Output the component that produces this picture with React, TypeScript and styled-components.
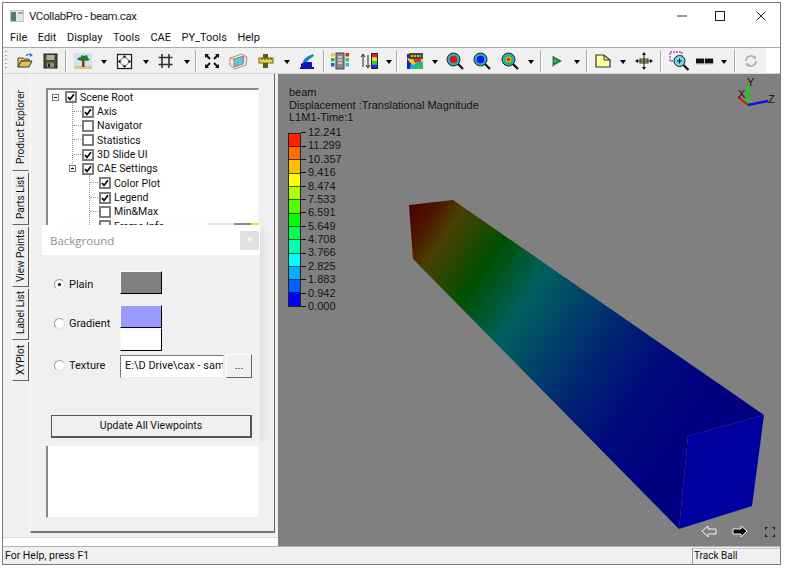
import styled, { createGlobalStyle } from "styled-components";
import type { ReactNode } from "react";

const GlobalStyle = createGlobalStyle`
  html, body {
    margin: 0;
    padding: 0;
    background: #fff;
  }
  body {
    font-family: Roboto, "Noto Sans", sans-serif;
    font-size: 11px;
    color: #111;
  }
`;

const Window = styled.div`
  box-sizing: border-box;
  width: 779px;
  height: 563px;
  margin: 2px 0 0 2px;
  border: 1px solid #7a7a7a;
  display: flex;
  flex-direction: column;
  background: #fff;
  overflow: hidden;
`;

const TitleBar = styled.div`
  height: 25px;
  flex: none;
  display: flex;
  align-items: center;
  padding-left: 7px;
  gap: 5px;
  font-size: 11.5px;
  letter-spacing: -0.4px;
  color: #222;
`;

const TitleText = styled.span`
  flex: 1;
`;

const WindowButton = styled.div<{ $w: number }>`
  width: ${(p) => p.$w}px;
  display: flex;
  justify-content: center;
  align-items: center;
`;

const MenuBar = styled.div`
  height: 19px;
  flex: none;
  display: flex;
  align-items: center;
  padding-left: 7px;
  gap: 10.5px;
  font-size: 11px;
  border-bottom: 1px solid #a8a8a8;
`;

const Toolbar = styled.div`
  height: 26px;
  flex: none;
  display: flex;
  align-items: center;
  background: linear-gradient(#f0f0f0, #f0f0f0) no-repeat left / 763px 100%;
  box-sizing: border-box;
  border-bottom: 1px solid #d8d8d8;
`;

const Gripper = styled.div`
  width: 9px;
  height: 20px;
  flex: none;
  background: repeating-linear-gradient(#a0a0a0 0 1px, transparent 1px 4px) no-repeat 2px 0 / 2px 100%;
`;

const ToolButton = styled.div<{ $w: number }>`
  width: ${(p) => p.$w}px;
  height: 22px;
  flex: none;
  display: flex;
  align-items: center;
  justify-content: center;
`;

const Separator = styled.div<{ $w: number }>`
  width: ${(p) => p.$w}px;
  height: 22px;
  flex: none;
  display: flex;
  justify-content: center;
  &::after {
    content: "";
    width: 1px;
    background: #a9a9a9;
    border-right: 1px solid #fafafa;
  }
`;

const Caret = styled.div<{ $w: number }>`
  width: ${(p) => p.$w}px;
  height: 22px;
  flex: none;
  display: flex;
  align-items: center;
  justify-content: center;
  &::after {
    content: "";
    border-left: 3.5px solid transparent;
    border-right: 3.5px solid transparent;
    border-top: 4px solid #000;
    margin-top: 2px;
  }
`;

const Main = styled.div`
  flex: 1;
  min-height: 0;
  display: flex;
`;

const Sidebar = styled.div`
  width: 275px;
  flex: none;
  display: flex;
  flex-direction: column;
  background: #f0f0f0;
`;

const SidebarBody = styled.div`
  height: 459px;
  flex: none;
  display: flex;
`;

const WhiteBand = styled.div`
  height: 8px;
  margin-top: 4px;
  background: #fff;
  border-top: 1px solid #d9d9d9;
`;

const TabColumn = styled.div`
  width: 27px;
  flex: none;
  box-sizing: border-box;
  padding: 16px 0 0 9px;
  display: flex;
  flex-direction: column;
  gap: 2px;
`;

const Tab = styled.div<{ $h: number; $active?: boolean }>`
  width: 17px;
  height: ${(p) => p.$h}px;
  box-sizing: border-box;
  padding-top: ${(p) => (p.$active ? 5 : 2)}px;
  writing-mode: vertical-rl;
  transform: rotate(180deg);
  display: flex;
  align-items: center;
  justify-content: center;
  font-size: 10px;
  line-height: 17px;
  white-space: nowrap;
  border-left: 1px solid ${(p) => (p.$active ? "#f0f0f0" : "#555")};
  border-top: 1px solid #666;
  border-right: 1px solid #fff;
`;

const ContentFrame = styled.div`
  width: 245px;
  flex: none;
  box-sizing: border-box;
  padding: 14px 15px 13px 15px;
  border-left: 1px solid #fafafa;
  border-right: 1px solid #666;
  border-bottom: 2px solid #777;
`;

const TreePanel = styled.div`
  position: relative;
  height: 100%;
  box-sizing: border-box;
  background: #fff;
  border-left: 2px solid #8a8a8a;
  border-top: 2px solid #8a8a8a;
  border-right: 1px solid #f4f4f4;
  border-bottom: 1px solid #f4f4f4;
`;

const TreeRow = styled.div<{ $indent: number }>`
  height: 14.35px;
  display: flex;
  align-items: center;
  padding-left: ${(p) => p.$indent}px;
  font-size: 10.5px;
  white-space: nowrap;
`;

const Expander = styled.span`
  width: 7px;
  height: 7px;
  flex: none;
  box-sizing: border-box;
  border: 1px solid #777;
  margin-right: 6px;
  position: relative;
  &::after {
    content: "";
    position: absolute;
    left: 1px;
    right: 1px;
    top: 2px;
    height: 1px;
    background: #000;
  }
`;

const Connector = styled.span`
  width: 8px;
  flex: none;
  height: 1px;
  margin: 0 1px 0 3px;
  border-top: 1px dotted #999;
`;

const Check = styled.span`
  width: 12px;
  height: 12px;
  flex: none;
  box-sizing: border-box;
  border: 2px solid #7c7c7c;
  background: #fff;
  margin-right: 3px;
  display: flex;
  align-items: center;
  justify-content: center;
`;

const GuideLine = styled.div<{ $left: number; $top: number; $h: number }>`
  position: absolute;
  left: ${(p) => p.$left}px;
  top: ${(p) => p.$top}px;
  height: ${(p) => p.$h}px;
  border-left: 1px dotted #999;
`;

const HiddenRowEdge = styled.div`
  position: absolute;
  left: 159px;
  right: -1px;
  top: 133px;
  height: 2px;
  background: linear-gradient(90deg, #e8e8e8 0 27px, #8c8c8c 27px 44px, #f4e020 44px);
`;

const Dialog = styled.div`
  position: absolute;
  left: -6px;
  top: 135px;
  width: 218px;
  height: 221px;
  background: #f0f0f0;
  box-shadow: 8px 0 8px -4px rgba(0, 0, 0, 0.07);
  display: flex;
  flex-direction: column;
`;

const DialogHeader = styled.div`
  height: 30px;
  flex: none;
  background: #fff;
  display: flex;
  align-items: center;
  justify-content: space-between;
  padding: 0 1px 0 8px;
  font-family: "Open Sans", sans-serif;
  font-size: 11.5px;
  color: #8f8f8f;
`;

const CloseButton = styled.div`
  width: 19px;
  height: 19px;
  margin-top: 1px;
  background: #e1e1e1;
  color: #fff;
  font-size: 10px;
  line-height: 17px;
  text-align: center;
`;

const DialogBody = styled.div`
  flex: 1;
  padding: 16px 8px 0 9px;
`;

const OptionRow = styled.div<{ $top: number }>`
  display: flex;
  align-items: center;
  margin-top: ${(p) => p.$top}px;
`;

const OptionLabel = styled.label<{ $lift?: number; $drop?: number }>`
  width: 69px;
  flex: none;
  display: flex;
  align-items: center;
  gap: 4px;
  font-size: 11px;
  padding-left: 3px;
  box-sizing: border-box;
  padding-top: ${(p) => p.$drop ?? 0}px;
  padding-bottom: ${(p) => p.$lift ?? 0}px;
`;

const Radio = styled.span<{ $on?: boolean }>`
  width: 11px;
  height: 11px;
  flex: none;
  box-sizing: border-box;
  border-radius: 50%;
  background: #fff;
  border: 1px solid #9a9a9a;
  border-right-color: #e4e4e4;
  border-bottom-color: #e4e4e4;
  display: flex;
  align-items: center;
  justify-content: center;
  &::after {
    content: "";
    width: 3px;
    height: 3px;
    border-radius: 50%;
    background: ${(p) => (p.$on ? "#000" : "transparent")};
  }
`;

const Swatch = styled.div<{ $color: string; $h: number }>`
  width: 42px;
  height: ${(p) => p.$h}px;
  box-sizing: border-box;
  background: ${(p) => p.$color};
  border-top: 1px solid #f8f8f8;
  border-left: 1px solid #f8f8f8;
  border-right: 1px solid #000;
  border-bottom: 1px solid #000;
`;

const SwatchStack = styled.div`
  display: flex;
  flex-direction: column;
`;

const PathBox = styled.div`
  width: 104px;
  height: 23px;
  flex: none;
  box-sizing: border-box;
  background: #fff;
  border: 1px solid #777;
  border-right-color: #eee;
  border-bottom-color: #eee;
  padding-left: 4px;
  font-size: 11px;
  line-height: 20px;
  white-space: nowrap;
  overflow: hidden;
`;

const SmallButton = styled.div`
  width: 26px;
  height: 24px;
  margin-left: 2px;
  box-sizing: border-box;
  border: 1px solid #fff;
  border-right-color: #666;
  border-bottom-color: #666;
  text-align: center;
  line-height: 22px;
  font-size: 11px;
`;

const WideButton = styled.div`
  margin-top: 37px;
  width: 201px;
  height: 23px;
  box-sizing: border-box;
  border: 1px solid #555;
  border-right-width: 2px;
  border-bottom-width: 2px;
  text-align: center;
  line-height: 20px;
  font-size: 10.5px;
  background: #f0f0f0;
`;

const Viewport = styled.div`
  flex: 1;
  position: relative;
  background: #808080;
  padding: 12px 0 0 10px;
  font-family: "Liberation Sans", Arial, sans-serif;
  font-size: 11px;
  color: #151515;
  line-height: 12.5px;
  overflow: hidden;
`;

const SceneLayer = styled.svg`
  position: absolute;
  left: 0;
  top: 0;
`;

const Caption = styled.div`
  position: relative;
  margin-left: 1px;
  white-space: nowrap;
`;

const Legend = styled.div`
  position: relative;
  margin-top: 2.5px;
  display: flex;
`;

const LegendBar = styled.div`
  width: 13px;
  margin-top: 6.7px;
  height: 174px;
  box-sizing: border-box;
  border: 1px solid #222;
  display: flex;
  flex-direction: column;
`;

const LegendBand = styled.div<{ $color: string }>`
  flex: 1;
  background: ${(p) => p.$color};
  border-bottom: 1px solid rgba(0, 0, 0, 0.65);
  &:last-child {
    border-bottom: 0;
  }
`;

const LegendScale = styled.div`
  display: flex;
  flex-direction: column;
`;

const LegendLabel = styled.div`
  height: 13.38px;
  line-height: 13.38px;
  display: flex;
  align-items: center;
  gap: 2px;
  font-size: 11px;
  &::before {
    content: "";
    width: 5px;
    height: 1px;
    background: #111;
  }
`;

const StatusBar = styled.div`
  height: 18px;
  flex: none;
  box-sizing: border-box;
  display: flex;
  align-items: center;
  background: #f0f0f0;
  border-top: 1px solid #b4b4b4;
  padding-left: 2px;
  font-size: 10.5px;
`;

const StatusText = styled.div`
  flex: 1;
`;

const StatusPane = styled.div`
  width: 88px;
  height: 100%;
  box-sizing: border-box;
  margin-top: 2px;
  padding-left: 1px;
  border-left: 1px solid #9a9a9a;
  border-top: 1px solid #c8c8c8;
  line-height: 14px;
  font-size: 10px;
`;

const Svg = ({ w = 18, h = 18, box, children }: { w?: number; h?: number; box?: string; children: ReactNode }) => (
  <svg width={w} height={h} viewBox={box ?? `0 0 ${w} ${h}`}>
    {children}
  </svg>
);

const OpenIcon = () => (
  <Svg>
    <path d="M2 6h5l1 1h5v2H5L2 15z" fill="#f4d25a" stroke="#444" />
    <path d="M2 15l3-6h11l-3 6z" fill="#e8c04a" stroke="#333" />
    <path d="M10 4c1-2 3-2 5-1" fill="none" stroke="#3a6fd8" strokeWidth="1.4" />
    <path d="M14 1l3 2-3 2z" fill="#3a6fd8" />
  </Svg>
);

const SaveIcon = () => (
  <Svg>
    <rect x="2" y="2" width="13" height="14" fill="#4b4b2c" stroke="#222" />
    <rect x="4.5" y="3" width="8" height="5" fill="#b0b0a0" />
    <rect x="5" y="10.5" width="7" height="5" fill="#8f8f70" />
    <rect x="6" y="11.5" width="2" height="3.5" fill="#222" />
  </Svg>
);

const TreeIcon = () => (
  <Svg w={20} h={18}>
    <rect x="1" y="1" width="18" height="16" fill="#cfe2ee" />
    <rect x="1" y="14" width="18" height="3" fill="#d8cf72" />
    <rect x="9" y="8" width="2.5" height="7" fill="#8a3a1a" />
    <path d="M4 8l2-3 1 1 2-3 2 1 3-1 1 3 2 2-4 1-2-1-3 1-2-1z" fill="#1a7d24" />
  </Svg>
);

const FitIcon = () => (
  <Svg>
    <rect x="1.5" y="2.5" width="14" height="14" fill="#fff" stroke="#222" strokeWidth="1.3" />
    <circle cx="8.5" cy="9.5" r="4" fill="none" stroke="#888" />
    <path d="M8.5 3l2 2.4h-4zM8.5 16l2-2.4h-4zM2 9.5l2.4-2v4zM15 9.5l-2.4-2v4z" fill="#111" />
  </Svg>
);

const GridIcon = () => (
  <Svg>
    <path d="M5 2v14M12 2v14M1.5 5.5h14M1.5 12.5h14" stroke="#333" strokeWidth="1.6" />
  </Svg>
);

const CornersIcon = () => (
  <Svg>
    <path d="M3 3l4 4M15 3l-4 4M3 15l4-4M15 15l-4-4" stroke="#111" strokeWidth="2" />
    <path d="M2 2h4l-4 4zM16 2h-4l4 4zM2 16h4l-4-4zM16 16h-4l4-4z" fill="#111" />
  </Svg>
);

const CubeIcon = () => (
  <Svg w={20} h={18}>
    <path d="M2 6l12-4 5 3-1 8-11 4-5-4z" fill="#ececec" stroke="#999" />
    <path d="M6 7l10-3-1 8-9 3z" fill="#48d2e8" stroke="#d65a5a" />
    <path d="M2 6l4 1v8" fill="none" stroke="#d9a030" />
  </Svg>
);

const RulerIcon = () => (
  <Svg w={18} h={18}>
    <rect x="6" y="2" width="5" height="14" fill="#5a5a20" />
    <rect x="2" y="6" width="14" height="5" fill="#e8d848" stroke="#6a6a10" />
    <path d="M5 6v2M8 6v2M11 6v2M14 6v2" stroke="#333" />
  </Svg>
);

const BeamToolIcon = () => (
  <Svg>
    <path d="M3 16v-4l3-2h8v6z" fill="#0a14d8" />
    <path d="M5 10c1-4 5-6 10-8l1 2c-3 2-6 4-7 6z" fill="#0d8fb8" />
    <rect x="2" y="15" width="14" height="2" fill="#1a1a80" />
  </Svg>
);

const LegendToolIcon = () => (
  <Svg w={20} h={18}>
    <rect x="6" y="1" width="8" height="16" fill="#8a8a8a" stroke="#444" />
    <path d="M8 5h4M8 8h4M8 11h4" stroke="#fff" />
    <rect x="1" y="1" width="3.5" height="3.5" fill="#f0d020" />
    <rect x="1" y="6" width="3.5" height="3.5" fill="#20c040" />
    <rect x="1" y="11" width="3.5" height="3.5" fill="#2050e0" />
    <rect x="15.5" y="1" width="3.5" height="3.5" fill="#e02020" />
    <rect x="15.5" y="6" width="3.5" height="3.5" fill="#20d060" />
    <rect x="15.5" y="11" width="3.5" height="3.5" fill="#20c0e0" />
  </Svg>
);

const SortBarIcon = () => (
  <Svg w={20} h={18}>
    <path d="M4 3v12M2 5l2-3 2 3M9 3v12M7 13l2 3 2-3" stroke="#222" fill="none" />
    <rect x="13" y="2" width="5" height="3.5" fill="#ee1c1c" />
    <rect x="13" y="5.5" width="5" height="3.5" fill="#f2e020" />
    <rect x="13" y="9" width="5" height="3.5" fill="#20d040" />
    <rect x="13" y="12.5" width="5" height="3.5" fill="#1a28e8" />
    <rect x="12.5" y="1.5" width="6" height="15" fill="none" stroke="#222" />
  </Svg>
);

const ContourIcon = () => (
  <Svg w={20} h={18}>
    <rect x="2" y="2" width="16" height="15" fill="#1424c8" />
    <path d="M5 17c0-6 3-9 13-9v9z" fill="#18b0d8" />
    <path d="M9 17c1-3 4-5 9-5v5z" fill="#2cc050" />
    <path d="M2 6h16v4c-6 0-8 1-9 3-3-1-5-3-7-7z" fill="#e8d020" />
    <path d="M8 7h8v3c-3 0-5 1-6 1z" fill="#e83020" />
    <rect x="4" y="1" width="14" height="6" fill="#4a4a30" />
    <path d="M6 4h10" stroke="#f0e070" strokeDasharray="2 1" strokeWidth="1.5" />
  </Svg>
);

const Lens = ({ core, ring = "#16b8c8" }: { core: string; ring?: string }) => (
  <Svg w={20} h={20}>
    <circle cx="8.5" cy="8.5" r="6.5" fill={ring} stroke="#222" />
    <circle cx="8.5" cy="8.5" r="3.8" fill={core} />
    <path d="M13 13l5 5" stroke="#111" strokeWidth="2.2" />
  </Svg>
);

const MixLens = () => (
  <Svg w={20} h={20}>
    <circle cx="8.5" cy="8.5" r="6.5" fill="#16b8c8" stroke="#222" />
    <circle cx="8.5" cy="8.5" r="4.4" fill="#20b848" />
    <circle cx="8.5" cy="8.5" r="3" fill="#f0c020" />
    <circle cx="8.5" cy="8.5" r="1.8" fill="#e02020" />
    <path d="M13 13l5 5" stroke="#111" strokeWidth="2.2" />
  </Svg>
);

const PlayFlag = () => (
  <Svg w={14} h={16}>
    <path d="M3 3v11" stroke="#666" />
    <path d="M3 3l9 5-9 5z" fill="#188038" />
    <path d="M4 6l4 2-4 2z" fill="#50b060" />
  </Svg>
);

const NoteIcon = () => (
  <Svg>
    <path d="M2 3h8l6 5v7H2z" fill="#ffff99" stroke="#333" strokeWidth="1.2" />
    <path d="M10 3v5h6" fill="none" stroke="#333" />
  </Svg>
);

const MoveIcon = () => (
  <Svg w={18} h={18}>
    <rect x="5" y="7" width="8" height="4" fill="#e8d848" stroke="#333" />
    <path d="M9 1v16M1 9h16" stroke="#222" />
    <path d="M9 0l2 3H7zM9 18l2-3H7zM0 9l3-2v4zM18 9l-3-2v4z" fill="#111" />
  </Svg>
);

const ZoomRectIcon = () => (
  <Svg w={20} h={20} box="0 0 20 20">
    <rect x="1" y="1" width="12" height="9" fill="none" stroke="#a050b0" strokeDasharray="2 1" strokeWidth="1.3" />
    <circle cx="10.5" cy="10" r="5.5" fill="#6fd8e8" stroke="#222" />
    <path d="M8 10h5M10.5 7.5v5" stroke="#111" />
    <path d="M14.5 14l5 5" stroke="#111" strokeWidth="2.2" />
  </Svg>
);

const BarsIcon = () => (
  <Svg w={22} h={8}>
    <rect x="0" y="1" width="10" height="6" fill="#111" />
    <rect x="11" y="1" width="10" height="6" fill="#111" />
    <path d="M0 7.5h21" stroke="#999" />
  </Svg>
);

const RefreshIcon = () => (
  <Svg>
    <path d="M4 9a5 5 0 0 1 8-4M14 9a5 5 0 0 1-8 4" fill="none" stroke="#b4b4b4" strokeWidth="1.8" />
    <path d="M10 5.5l4-2v4zM8 12.5l-4 2v-4z" fill="#b4b4b4" />
  </Svg>
);

type ToolItem =
  | { kind: "btn"; w: number; icon: ReactNode }
  | { kind: "caret"; w: number }
  | { kind: "sep"; w: number };

const btn = (w: number, icon: ReactNode): ToolItem => ({ kind: "btn", w, icon });
const caret = (w: number): ToolItem => ({ kind: "caret", w });
const sep = (w: number): ToolItem => ({ kind: "sep", w });

const tools: ToolItem[] = [
  btn(26, <OpenIcon />),
  btn(25, <SaveIcon />),
  sep(6),
  btn(28, <TreeIcon />),
  caret(14),
  btn(28, <FitIcon />),
  caret(13),
  btn(28, <GridIcon />),
  caret(13),
  sep(5),
  btn(27, <CornersIcon />),
  btn(25, <CubeIcon />),
  btn(31, <RulerIcon />),
  caret(12),
  btn(28, <BeamToolIcon />),
  sep(5),
  btn(28, <LegendToolIcon />),
  btn(30, <SortBarIcon />),
  caret(10),
  sep(6),
  btn(30, <ContourIcon />),
  caret(10),
  btn(30, <Lens core="#e81010" />),
  btn(24, <Lens core="#1010e8" />),
  btn(32, <MixLens />),
  caret(10),
  sep(10),
  btn(22, <PlayFlag />),
  caret(18),
  sep(2),
  btn(30, <NoteIcon />),
  caret(10),
  btn(32, <MoveIcon />),
  sep(2),
  btn(34, <ZoomRectIcon />),
  btn(18, <BarsIcon />),
  caret(20),
  sep(2),
  btn(30, <RefreshIcon />),
  sep(1),
];

const menus = ["File", "Edit", "Display", "Tools", "CAE", "PY_Tools", "Help"];

const tabs = [
  { label: "Product Explorer", h: 81, active: true },
  { label: "Parts List", h: 52 },
  { label: "View Points", h: 60 },
  { label: "Label List", h: 51 },
  { label: "XYPlot", h: 39 },
];

const treeRows = [
  { label: "Scene Root", indent: 4, on: true, expander: true },
  { label: "Axis", indent: 22, on: true },
  { label: "Navigator", indent: 22, on: false },
  { label: "Statistics", indent: 22, on: false },
  { label: "3D Slide UI", indent: 22, on: true },
  { label: "CAE Settings", indent: 21, on: true, expander: true },
  { label: "Color Plot", indent: 39, on: true },
  { label: "Legend", indent: 39, on: true },
  { label: "Min&Max", indent: 39, on: false },
  { label: "Frame Info", indent: 39, on: false },
];

const legendValues = [
  "12.241", "11.299", "10.357", "9.416", "8.474", "7.533", "6.591",
  "5.649", "4.708", "3.766", "2.825", "1.883", "0.942", "0.000",
];

const legendColors = [
  "#ff2000", "#ff7000", "#ffc000", "#ffff00", "#b0ff00", "#50ff00", "#00ff00",
  "#00ff50", "#00ffb0", "#00ffff", "#00b0ff", "#0060ff", "#0000ff",
];

const CheckMark = () => (
  <svg width="8" height="8" viewBox="0 0 8 8">
    <path d="M1 4l2 2.4L7 1.2" fill="none" stroke="#000" strokeWidth="1.7" />
  </svg>
);

const App = () => {
  return (
    <Window>
      <GlobalStyle />
      <TitleBar>
        <svg width="14" height="12" viewBox="0 0 14 12">
          <rect x="0" y="0" width="14" height="12" fill="#dfe6e6" stroke="#9aa" />
          <rect x="1" y="2" width="5" height="9" fill="#5d7474" />
          <rect x="8" y="2" width="5" height="2" fill="#9ab" />
        </svg>
        <TitleText>VCollabPro - beam.cax</TitleText>
        <WindowButton $w={34}>
          <svg width="11" height="2" viewBox="0 0 11 2">
            <path d="M0 1h10" stroke="#333" />
          </svg>
        </WindowButton>
        <WindowButton $w={32}>
          <svg width="10" height="10" viewBox="0 0 10 10">
            <rect x="0.5" y="0.5" width="9" height="9" fill="none" stroke="#222" />
          </svg>
        </WindowButton>
        <WindowButton $w={39}>
          <svg width="10" height="10" viewBox="0 0 10 10">
            <path d="M0.5 0.5l9 9M9.5 0.5l-9 9" stroke="#222" />
          </svg>
        </WindowButton>
      </TitleBar>
      <MenuBar>
        {menus.map((m) => (
          <span key={m}>{m}</span>
        ))}
      </MenuBar>
      <Toolbar>
        <Gripper />
        {tools.map((t, i) => {
          if (t.kind === "sep") return <Separator key={i} $w={t.w} />;
          if (t.kind === "caret") return <Caret key={i} $w={t.w} />;
          return (
            <ToolButton key={i} $w={t.w}>
              {t.icon}
            </ToolButton>
          );
        })}
      </Toolbar>
      <Main>
        <Sidebar>
          <SidebarBody>
            <TabColumn>
              {tabs.map((t) => (
                <Tab key={t.label} $h={t.h} $active={t.active}>
                  {t.label}
                </Tab>
              ))}
            </TabColumn>
            <ContentFrame>
              <TreePanel>
                <GuideLine $left={24} $top={10} $h={68} />
                <GuideLine $left={41} $top={85} $h={50} />
                {treeRows.map((r) => (
                  <TreeRow key={r.label} $indent={r.indent}>
                    {r.expander ? <Expander /> : <Connector />}
                    <Check>{r.on && <CheckMark />}</Check>
                    {r.label}
                  </TreeRow>
                ))}
                <HiddenRowEdge />
                <Dialog>
                  <DialogHeader>
                    Background
                    <CloseButton>x</CloseButton>
                  </DialogHeader>
                  <DialogBody>
                    <OptionRow $top={0}>
                      <OptionLabel $drop={3}>
                        <Radio $on />
                        Plain
                      </OptionLabel>
                      <Swatch $color="#808080" $h={23} />
                    </OptionRow>
                    <OptionRow $top={11}>
                      <OptionLabel $lift={10}>
                        <Radio />
                        Gradient
                      </OptionLabel>
                      <SwatchStack>
                        <Swatch $color="#9999ff" $h={23} />
                        <Swatch $color="#ffffff" $h={23} />
                      </SwatchStack>
                    </OptionRow>
                    <OptionRow $top={3}>
                      <OptionLabel $lift={2}>
                        <Radio />
                        Texture
                      </OptionLabel>
                      <PathBox>E:\D Drive\cax - sam</PathBox>
                      <SmallButton>...</SmallButton>
                    </OptionRow>
                    <WideButton>Update All Viewpoints</WideButton>
                  </DialogBody>
                </Dialog>
              </TreePanel>
            </ContentFrame>
          </SidebarBody>
          <WhiteBand />
        </Sidebar>
        <Viewport>
          <SceneLayer width="502" height="472" viewBox="278 74 502 472">
            <defs>
              <linearGradient id="beamFill" gradientUnits="userSpaceOnUse" x1="409" y1="205" x2="708" y2="403">
                <stop offset="0" stopColor="#4c0000" />
                <stop offset="0.07" stopColor="#4c1800" />
                <stop offset="0.13" stopColor="#4a4000" />
                <stop offset="0.27" stopColor="#005000" />
                <stop offset="0.42" stopColor="#006060" />
                <stop offset="0.65" stopColor="#002a70" />
                <stop offset="0.82" stopColor="#000a7c" />
                <stop offset="1" stopColor="#000080" />
              </linearGradient>
            </defs>
            <path d="M409 205L453 200L764 415L688 436L679 529L413 259Z" fill="url(#beamFill)" />
            <path d="M688 436L764 415L752 506L679 529Z" fill="#0000a0" />
            <path d="M702 531l6-5v3h8v5h-8v3z" fill="none" stroke="#f4f4f4" />
            <path d="M747 531l-6-5v3h-8v5h8v3z" fill="#000" stroke="#f4f4f4" />
            <path
              d="M765 527h3l-3 3zM775 527h-3l3 3zM765 537h3l-3-3zM775 537h-3l3-3z"
              fill="#222"
            />
            <path d="M748 105L748 86" stroke="#00e000" strokeWidth="2.5" />
            <path d="M748 105L738 97" stroke="#e81010" strokeWidth="2" />
            <path d="M748 105L768 101" stroke="#1010e8" strokeWidth="2.5" />
            <text x="747" y="86" fontFamily="Liberation Sans" fontSize="11" fill="#111">Y</text>
            <text x="738" y="98" fontFamily="Liberation Sans" fontSize="11" fill="#111">X</text>
            <text x="768" y="103" fontFamily="Liberation Sans" fontSize="11" fill="#111">Z</text>
          </SceneLayer>
          <Caption>
            beam
            <br />
            Displacement :Translational Magnitude
            <br />
            L1M1-Time:1
          </Caption>
          <Legend>
            <LegendBar>
              {legendColors.map((c) => (
                <LegendBand key={c} $color={c} />
              ))}
            </LegendBar>
            <LegendScale>
              {legendValues.map((v) => (
                <LegendLabel key={v}>{v}</LegendLabel>
              ))}
            </LegendScale>
          </Legend>
        </Viewport>
      </Main>
      <StatusBar>
        <StatusText>For Help, press F1</StatusText>
        <StatusPane>Track Ball</StatusPane>
      </StatusBar>
    </Window>
  );
};

export default App;
